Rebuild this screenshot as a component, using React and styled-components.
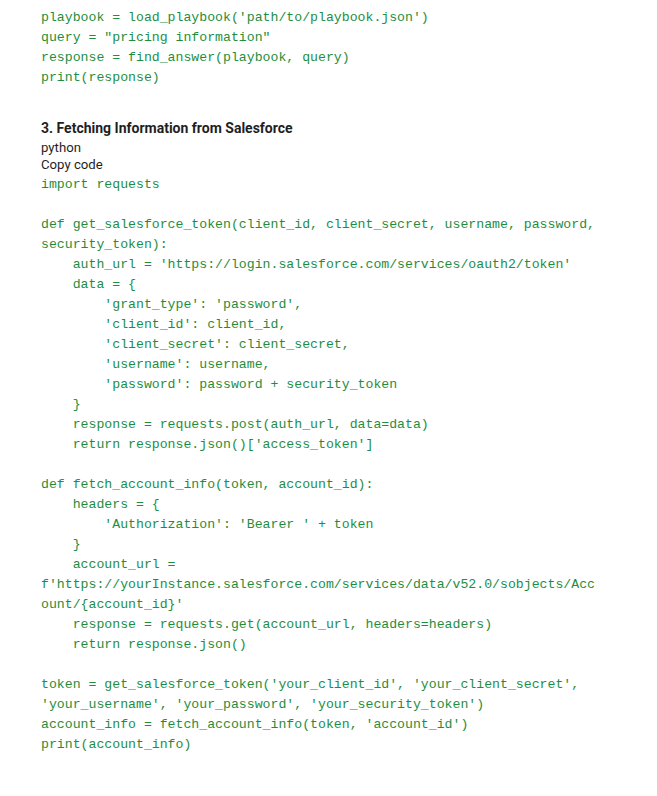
import React from "react";
import styled, { createGlobalStyle } from "styled-components";

const Global = createGlobalStyle`
  html, body { margin: 0; padding: 0; background: #ffffff; }
  body { font-family: Roboto, "Liberation Sans", Arial, sans-serif; }
`;

const Page = styled.main`
  padding: 8px 0 40px 41px;
  display: flex;
  flex-direction: column;
`;

const Code = styled.pre`
  margin: ${(p) => p.$mt || 0}px 0 0 0;
  font-family: "Liberation Mono", "DejaVu Sans Mono", monospace;
  font-size: 13.2px;
  line-height: 20px;
  color: #1e8e3e;
  white-space: pre-wrap;
  overflow-wrap: anywhere;
  width: 70.5ch;
`;

const Heading = styled.h3`
  margin: 30px 0 0 0;
  font-size: 14px;
  font-weight: 700;
  line-height: 21px;
  color: #1f1f1f;
`;

const Label = styled.div`
  font-size: 13.2px;
  line-height: 17px;
  color: #1f1f1f;
`;

const code1 = `playbook = load_playbook('path/to/playbook.json')
query = "pricing information"
response = find_answer(playbook, query)
print(response)`;

const code2 = `import requests

def get_salesforce_token(client_id, client_secret, username, password, security_token):
    auth_url = 'https://login.salesforce.com/services/oauth2/token'
    data = {
        'grant_type': 'password',
        'client_id': client_id,
        'client_secret': client_secret,
        'username': username,
        'password': password + security_token
    }
    response = requests.post(auth_url, data=data)
    return response.json()['access_token']

def fetch_account_info(token, account_id):
    headers = {
        'Authorization': 'Bearer ' + token
    }
    account_url = f'https://yourInstance.salesforce.com/services/data/v52.0/sobjects/Account/{account_id}'
    response = requests.get(account_url, headers=headers)
    return response.json()

token = get_salesforce_token('your_client_id', 'your_client_secret', 'your_username', 'your_password', 'your_security_token')
account_info = fetch_account_info(token, 'account_id')
print(account_info)`;

export default function App() {
  return (
    <>
      <Global />
      <Page>
        <Code>{code1}</Code>
        <Heading>3. Fetching Information from Salesforce</Heading>
        <Label>python</Label>
        <Label>Copy code</Label>
        <Code $mt={2}>{code2}</Code>
      </Page>
    </>
  );
}
